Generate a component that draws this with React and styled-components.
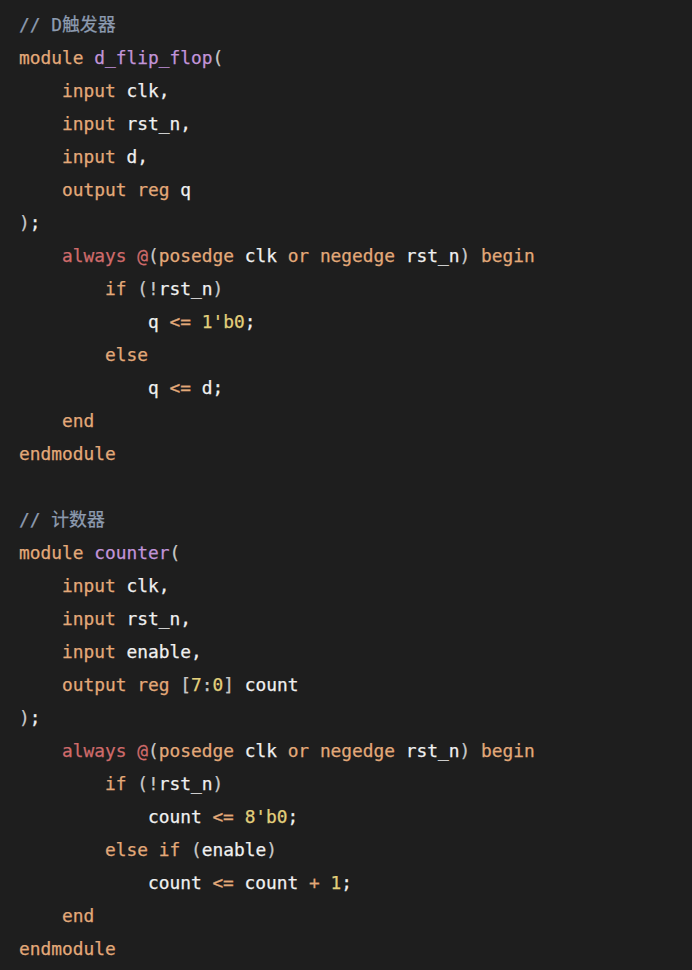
import styled, { createGlobalStyle } from "styled-components";

const GlobalStyle = createGlobalStyle`
  html, body {
    margin: 0;
    padding: 0;
    background: #1e1e1e;
  }
`;

const colors = {
  kw: "#e3a979",
  fn: "#c294d9",
  red: "#cf6b6b",
  num: "#e3d07c",
  pl: "#f0f0f0",
  pn: "#c8c8c8",
  cm: "#8d9bb0",
};

const T = (kind, text) => ({ kind, text });

const lines = [
  [T("cm", "// D触发器")],
  [T("kw", "module"), T("pl", " "), T("fn", "d_flip_flop"), T("pn", "(")],
  [T("pl", "    "), T("kw", "input"), T("pl", " clk,")],
  [T("pl", "    "), T("kw", "input"), T("pl", " rst_n,")],
  [T("pl", "    "), T("kw", "input"), T("pl", " d,")],
  [T("pl", "    "), T("kw", "output"), T("pl", " "), T("kw", "reg"), T("pl", " q")],
  [T("pn", ")"), T("pl", ";")],
  [
    T("pl", "    "), T("red", "always"), T("pl", " "), T("red", "@"), T("pn", "("),
    T("kw", "posedge"), T("pl", " clk "), T("kw", "or"), T("pl", " "),
    T("kw", "negedge"), T("pl", " rst_n"), T("pn", ")"), T("pl", " "), T("kw", "begin"),
  ],
  [T("pl", "        "), T("kw", "if"), T("pl", " "), T("pn", "(!"), T("pl", "rst_n"), T("pn", ")")],
  [T("pl", "            q "), T("kw", "<="), T("pl", " "), T("num", "1'b0"), T("pl", ";")],
  [T("pl", "        "), T("kw", "else")],
  [T("pl", "            q "), T("kw", "<="), T("pl", " d;")],
  [T("pl", "    "), T("kw", "end")],
  [T("kw", "endmodule")],
  [],
  [T("cm", "// 计数器")],
  [T("kw", "module"), T("pl", " "), T("fn", "counter"), T("pn", "(")],
  [T("pl", "    "), T("kw", "input"), T("pl", " clk,")],
  [T("pl", "    "), T("kw", "input"), T("pl", " rst_n,")],
  [T("pl", "    "), T("kw", "input"), T("pl", " enable,")],
  [
    T("pl", "    "), T("kw", "output"), T("pl", " "), T("kw", "reg"), T("pl", " "),
    T("pn", "["), T("num", "7"), T("pn", ":"), T("num", "0"), T("pn", "]"), T("pl", " count"),
  ],
  [T("pn", ")"), T("pl", ";")],
  [
    T("pl", "    "), T("red", "always"), T("pl", " "), T("red", "@"), T("pn", "("),
    T("kw", "posedge"), T("pl", " clk "), T("kw", "or"), T("pl", " "),
    T("kw", "negedge"), T("pl", " rst_n"), T("pn", ")"), T("pl", " "), T("kw", "begin"),
  ],
  [T("pl", "        "), T("kw", "if"), T("pl", " "), T("pn", "(!"), T("pl", "rst_n"), T("pn", ")")],
  [T("pl", "            count "), T("kw", "<="), T("pl", " "), T("num", "8'b0"), T("pl", ";")],
  [
    T("pl", "        "), T("kw", "else"), T("pl", " "), T("kw", "if"), T("pl", " "),
    T("pn", "("), T("pl", "enable"), T("pn", ")"),
  ],
  [
    T("pl", "            count "), T("kw", "<="), T("pl", " count "), T("kw", "+"),
    T("pl", " "), T("num", "1"), T("pl", ";"),
  ],
  [T("pl", "    "), T("kw", "end")],
  [T("kw", "endmodule")],
];

export default function App() {
  return (
    <>
      <GlobalStyle />
      <CodeBlock>
        {lines.map((line, i) => (
          <Line key={i}>
            {line.length === 0
              ? " "
              : line.map((t, j) => (
                  <Token key={j} kind={t.kind}>
                    {t.text}
                  </Token>
                ))}
          </Line>
        ))}
      </CodeBlock>
    </>
  );
}

const CodeBlock = styled.pre`
  margin: 0;
  min-height: 100vh;
  box-sizing: border-box;
  padding: 8px 19px;
  background: #1e1e1e;
  font-family: "DejaVu Sans Mono", "Noto Sans CJK SC", monospace;
  font-size: 17.85px;
  line-height: 33px;
  color: #f0f0f0;
  -webkit-text-stroke: 0.25px currentColor;
  display: flex;
  flex-direction: column;
`;

const Line = styled.div`
  height: 33px;
  white-space: pre;
`;

const Token = styled.span.withConfig({
  shouldForwardProp: (prop) => prop !== "kind",
})`
  color: ${(props) => colors[props.kind]};
`;
